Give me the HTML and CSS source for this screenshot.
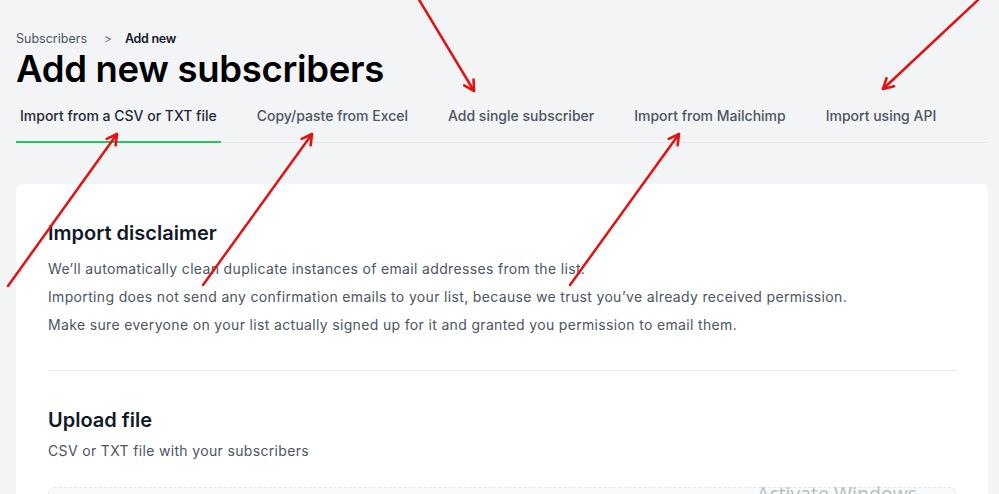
FILE: index.html
```html
<!DOCTYPE html>
<html lang="en">
<head>
<meta charset="utf-8">
<title>Add new subscribers</title>
<link rel="stylesheet" href="styles.css">
</head>
<body>
<div class="page">
  <nav class="crumbs">
    <span class="crumb">Subscribers</span>
    <span class="sep">&gt;</span>
    <span class="crumb current">Add new</span>
  </nav>
  <h1 class="title">Add new subscribers</h1>
  <div class="tabs">
    <div class="tab active">Import from a CSV or TXT file</div>
    <div class="tab">Copy/paste from Excel</div>
    <div class="tab">Add single subscriber</div>
    <div class="tab">Import from Mailchimp</div>
    <div class="tab">Import using API</div>
  </div>
  <section class="card">
    <h2 class="heading">Import disclaimer</h2>
    <p class="text first">We’ll automatically clean duplicate instances of email addresses from the list.</p>
    <p class="text">Importing does not send any confirmation emails to your list, because we trust you’ve already received permission.</p>
    <p class="text">Make sure everyone on your list actually signed up for it and granted you permission to email them.</p>
    <hr class="divider">
    <h2 class="heading">Upload file</h2>
    <p class="text sub">CSV or TXT file with your subscribers</p>
    <div class="dropzone"></div>
  </section>
</div>
<div class="watermark">Activate Windows</div>
<svg class="annotations" width="999" height="494" viewBox="0 0 999 494">
  <defs>
    <marker id="ah" viewBox="0 0 14 14" refX="12" refY="7" markerWidth="14" markerHeight="14" markerUnits="userSpaceOnUse" orient="auto">
      <path d="M2,1.5 L12,7 L2,12.5" fill="none" stroke="#e31212" stroke-width="2.6" stroke-linecap="round" stroke-linejoin="round"/>
    </marker>
  </defs>
  <g stroke="#e31212" stroke-width="2.5" stroke-linecap="round" fill="none" marker-end="url(#ah)">
    <line x1="418" y1="-2" x2="474" y2="91"/>
    <line x1="979" y1="-1" x2="883" y2="89"/>
    <line x1="8" y1="286" x2="117" y2="134"/>
    <line x1="203" y1="285" x2="312" y2="134"/>
    <line x1="570" y1="285" x2="679" y2="134"/>
  </g>
</svg>
</body>
</html>
```
FILE: styles.css
```css
html, body {
  margin: 0;
  padding: 0;
  height: 494px;
  overflow: hidden;
}
body {
  background: #f3f4f6;
  font-family: Inter, "Noto Sans", sans-serif;
  color: #111827;
  position: relative;
}
.page {
  padding: 31px 11px 0 16px;
}
.crumbs {
  display: flex;
  align-items: center;
  font-size: 12.5px;
  line-height: 15px;
  color: #4b5563;
}
.sep {
  margin: 0 13px 0 17px;
  color: #6b7280;
  font-size: 12px;
}
.crumb.current {
  color: #111827;
  font-weight: 600;
  letter-spacing: -0.3px;
}
.title {
  margin: 3px 0 0;
  font-size: 36.5px;
  line-height: 40px;
  font-weight: 600;
  letter-spacing: -0.3px;
  color: #000;
}
.tabs {
  display: flex;
  gap: 32px;
  border-bottom: 1px solid #e5e7eb;
}
.tab {
  padding: 17px 4px 15px;
  font-size: 14px;
  line-height: 20px;
  font-weight: 500;
  color: #4b5563;
  margin-bottom: -1px;
  border-bottom: 2px solid transparent;
}
.tab.active {
  color: #1f2937;
  border-bottom-color: #22c55e;
}
.card {
  margin-top: 41px;
  background: #fff;
  border-radius: 6px;
  padding: 35px 32px 40px;
}
.heading {
  margin: 0;
  font-size: 20px;
  line-height: 28px;
  font-weight: 600;
  color: #111827;
}
.text {
  margin: 0;
  font-size: 14px;
  line-height: 28px;
  color: #4b5563;
  letter-spacing: 0.34px;
}
.text.first {
  margin-top: 8px;
}
.text.sub {
  margin-top: 3px;
}
.divider {
  border: 0;
  border-top: 1px solid #e5e7eb;
  margin: 31px 0 35px;
}
.dropzone {
  margin-top: 22px;
  height: 120px;
  border: 1px dashed #e5e7eb;
  border-radius: 6px;
  background: #f9fafb;
}
.watermark {
  position: absolute;
  left: 757px;
  top: 480px;
  font-family: "Open Sans", "Noto Sans", sans-serif;
  font-size: 19.5px;
  color: #b8bcc2;
  white-space: nowrap;
}
.annotations {
  position: absolute;
  left: 0;
  top: 0;
  pointer-events: none;
}
```
